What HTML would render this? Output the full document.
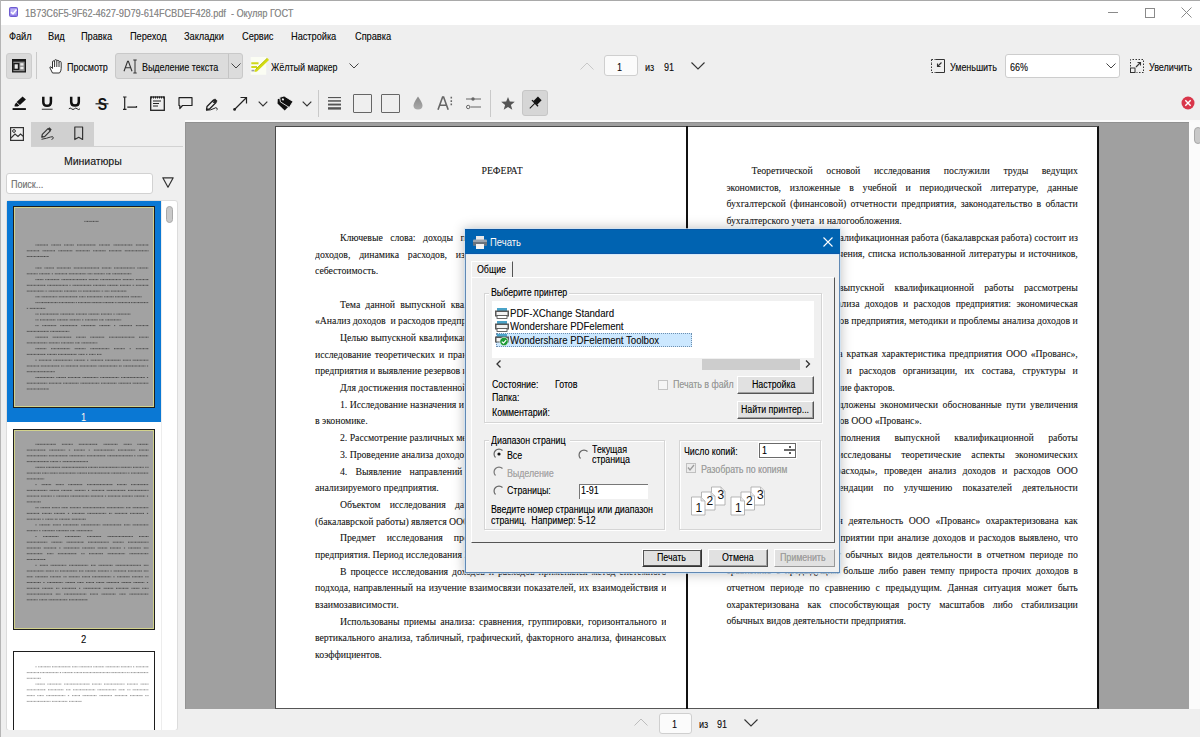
<!DOCTYPE html>
<html><head><meta charset="utf-8">
<style>
*{margin:0;padding:0;box-sizing:border-box}
html,body{width:1200px;height:737px;overflow:hidden}
body{position:relative;background:#efefef;font-family:"Liberation Sans",sans-serif;color:#222}
.a{position:absolute}
.u{position:absolute;font-family:"Liberation Sans",sans-serif;font-size:10.5px;line-height:12px;white-space:nowrap;transform-origin:0 50%;transform:scaleX(.85);color:#111;text-shadow:.25px 0 0 rgba(0,0,0,.35)}
.ic{position:absolute;overflow:visible}
.sep{position:absolute;width:1px;background:#c9c9c9}
.pg{position:absolute;background:#fff}
.tx{position:absolute;font-family:"Liberation Serif",serif;font-size:9.7px;line-height:16.7px;white-space:nowrap;color:#1c1c1c;text-shadow:.25px 0 0 rgba(0,0,0,.3)}
.tx div{height:16.7px;overflow:hidden}
.j{text-align:justify;text-align-last:justify}
.in{text-indent:25px}
.d{position:absolute;font-family:"Liberation Sans",sans-serif;font-size:10px;line-height:12px;white-space:nowrap;transform-origin:0 50%;transform:scaleX(.88);color:#000;text-shadow:.2px 0 0 rgba(0,0,0,.3)}
</style></head><body>
<!-- window border -->
<div class="a" style="left:0;top:0;width:1200px;height:25px;background:#fff"></div>
<div class="a" style="left:0;top:0;width:1200px;height:1px;background:#a9a9a9"></div>
<div class="a" style="left:0;top:0;width:1px;height:737px;background:#b5b5b5"></div>
<!-- title icon -->
<svg class="ic" style="left:9px;top:7px" width="9" height="10" viewBox="0 0 9 10"><rect x="0.5" y="0.5" width="8" height="9" rx="1" fill="#8c7ae6" stroke="#6d5bd0"/><rect x="1.5" y="1.5" width="6" height="6" fill="#b9b0f5"/><path d="M2 5 L4 7 L7.5 2.5" stroke="#fff" stroke-width="1.4" fill="none"/></svg>
<div class="u" style="left:25px;top:6.5px;color:#8a8a8a;font-size:10.8px;transform:scaleX(.845)">1B73C6F5-9F62-4627-9D79-614FCBDEF428.pdf&nbsp; - Окуляр ГОСТ</div>
<!-- window controls -->
<div class="a" style="left:1108px;top:12px;width:10px;height:1px;background:#8a8a8a"></div>
<div class="a" style="left:1145px;top:7.5px;width:10px;height:10px;border:1px solid #8a8a8a"></div>
<svg class="ic" style="left:1181px;top:7px" width="11" height="11" viewBox="0 0 11 11"><path d="M0.5 0.5 L10.5 10.5 M10.5 0.5 L0.5 10.5" stroke="#8a8a8a" stroke-width="1"/></svg>
<!-- menu -->
<div class="u" style="left:9px;top:30px;transform:scaleX(.875)">Файл</div>
<div class="u" style="left:48px;top:30px;transform:scaleX(.875)">Вид</div>
<div class="u" style="left:81px;top:30px;transform:scaleX(.875)">Правка</div>
<div class="u" style="left:130px;top:30px;transform:scaleX(.875)">Переход</div>
<div class="u" style="left:184px;top:30px;transform:scaleX(.875)">Закладки</div>
<div class="u" style="left:242px;top:30px;transform:scaleX(.875)">Сервис</div>
<div class="u" style="left:291px;top:30px;transform:scaleX(.875)">Настройка</div>
<div class="u" style="left:355px;top:30px;transform:scaleX(.875)">Справка</div>
<!-- toolbar 1 -->
<div class="a" style="left:6px;top:53px;width:26px;height:26px;background:#dadada;border:1px solid #cdcdcd;border-radius:3px"></div>
<svg class="ic" style="left:12px;top:59px" width="14" height="14" viewBox="0 0 14 14"><rect x="0" y="0" width="14" height="13.5" fill="#1a1a1a"/><rect x="1.3" y="2.6" width="11.4" height="9.6" fill="#8a8a8a"/><rect x="1.3" y="4" width="6" height="7" fill="#1a1a1a"/><rect x="2.6" y="5.3" width="3.2" height="4.4" fill="#e9e9e9"/><rect x="8.3" y="4.2" width="3.2" height="2.4" fill="#e9e9e9"/><rect x="8.3" y="7.8" width="3.2" height="2.4" fill="#e9e9e9"/></svg>
<div class="sep" style="left:36px;top:52px;height:27px"></div>
<svg class="ic" style="left:49px;top:59px" width="14" height="15" viewBox="0 0 14 15"><path d="M3.5 14 L1 9 Q0.5 7.8 1.8 7.8 L3.5 9.5 L3.5 3 Q3.5 1.8 4.6 1.8 Q5.6 1.8 5.6 3 L5.6 1.8 Q5.6 0.6 6.7 0.6 Q7.8 0.6 7.8 1.8 L7.8 2.4 Q7.8 1.3 8.9 1.3 Q10 1.3 10 2.4 L10 3.5 Q10 2.5 11.1 2.5 Q12.2 2.5 12.2 3.6 L12.2 9.5 Q12.2 12 10.5 14 Z M5.6 3 L5.6 8 M7.8 2.4 L7.8 8 M10 3.5 L10 8" stroke="#333" stroke-width="1" fill="#fff" stroke-linejoin="round"/></svg>
<div class="u" style="left:67px;top:60.7px">Просмотр</div>
<div class="a" style="left:115px;top:53px;width:128px;height:26px;background:#dcdcdc;border:1px solid #c9c9c9;border-radius:3px"></div>
<div class="sep" style="left:228px;top:54px;height:24px;background:#c4c4c4"></div>
<svg class="ic" style="left:123px;top:59px" width="15" height="15" viewBox="0 0 15 15"><path d="M1 12.3 L4.6 2.3 L5.4 2.3 L9 12.3 M2.3 8.8 L7.7 8.8" stroke="#333" stroke-width="1.1" fill="none"/><path d="M10.3 1 L13.7 1 M12 1 L12 14 M10.3 14 L13.7 14" stroke="#333" stroke-width="1" fill="none"/></svg>
<div class="u" style="left:142px;top:60.7px">Выделение текста</div>
<svg class="ic" style="left:231px;top:63px" width="10" height="6" viewBox="0 0 10 6"><path d="M0.5 0.5 L5 5 L9.5 0.5" stroke="#444" stroke-width="1" fill="none"/></svg>
<svg class="ic" style="left:250px;top:57px" width="19" height="18" viewBox="0 0 19 18"><rect x="0.7" y="0" width="15.5" height="17.8" fill="#fbfdf3"/><path d="M1.3 6.2 L8.5 6.2 M1.3 10 L7 10" stroke="#cfd81c" stroke-width="2"/><path d="M1.5 13.6 L4.5 13.6" stroke="#9a9aa8" stroke-width="1.6"/><path d="M5 13 L17.5 1 L19 3 L7 14.5 L4.5 15 Z" fill="#d4dc12"/><path d="M5.5 12.5 L17 1.5" stroke="#b5bf00" stroke-width="1"/></svg>
<div class="u" style="left:271px;top:60.7px">Жёлтый маркер</div>
<svg class="ic" style="left:349px;top:63px" width="10" height="6" viewBox="0 0 10 6"><path d="M0.5 0.5 L5 5 L9.5 0.5" stroke="#444" stroke-width="1" fill="none"/></svg>
<!-- page nav top -->
<svg class="ic" style="left:580px;top:62px" width="14" height="8" viewBox="0 0 14 8"><path d="M0.5 7.5 L7 1 L13.5 7.5" stroke="#c8c8c8" stroke-width="1" fill="none"/></svg>
<div class="a" style="left:604px;top:55px;width:34px;height:21px;background:#fbfbfb;border:1px solid #cfcfcf;border-radius:3px"></div>
<div class="u" style="left:617px;top:60.7px">1</div>
<div class="u" style="left:645px;top:60.7px">из</div>
<div class="u" style="left:664px;top:60.7px">91</div>
<svg class="ic" style="left:691px;top:62px" width="14" height="8" viewBox="0 0 14 8"><path d="M0.5 0.5 L7 7 L13.5 0.5" stroke="#333" stroke-width="1.1" fill="none"/></svg>
<!-- zoom -->
<svg class="ic" style="left:931px;top:59px" width="14" height="14" viewBox="0 0 14 14"><path d="M4.5 0.5 L13.5 0.5 L13.5 13.5 L4.5 13.5" stroke="#333" stroke-width="1" fill="none"/><path d="M0.5 4.5 L0.5 13.5 M0.5 13.5 L4.5 13.5" stroke="#333" stroke-width="1" stroke-dasharray="1.5 1.5" fill="none"/><path d="M0.5 0.5 L4.5 0.5 M0.5 0.5 L0.5 4.5" stroke="#333" stroke-width="1" stroke-dasharray="1.5 1.5" fill="none"/><path d="M10.5 3.5 L6.5 7.5 M6.5 4.5 L6.5 7.5 L9.5 7.5" stroke="#333" stroke-width="1.1" fill="none"/></svg>
<div class="u" style="left:950px;top:60.7px">Уменьшить</div>
<div class="a" style="left:1005px;top:54px;width:115px;height:24px;background:#fff;border:1px solid #cdcdcd;border-radius:3px"></div>
<div class="u" style="left:1010px;top:60.7px">66%</div>
<svg class="ic" style="left:1106px;top:63px" width="10" height="6" viewBox="0 0 10 6"><path d="M0.5 0.5 L5 5 L9.5 0.5" stroke="#444" stroke-width="1" fill="none"/></svg>
<svg class="ic" style="left:1130px;top:59px" width="14" height="14" viewBox="0 0 14 14"><rect x="0.5" y="9" width="4.5" height="4.5" stroke="#333" stroke-width="1" fill="none"/><path d="M0.5 7.5 L0.5 0.5 L13.5 0.5 L13.5 13.5 L6.5 13.5" stroke="#333" stroke-width="1" stroke-dasharray="1.5 1.5" fill="none"/><path d="M6 8 L10.5 3.5 M7.5 3.5 L10.5 3.5 L10.5 6.5" stroke="#333" stroke-width="1.1" fill="none"/></svg>
<div class="u" style="left:1149px;top:60.7px">Увеличить</div>
<!-- toolbar 2 -->
<svg class="ic" style="left:12px;top:95px" width="16" height="16" viewBox="0 0 16 16"><path d="M4.6 6.9 L10.6 1.4 L13.9 4.6 L7.9 10.1 Z" fill="#111"/><path d="M4.2 7.5 L7.4 10.6 L5.6 11.6 L2.6 11.6 L2.6 10 Z" fill="#111"/><rect x="0.6" y="13.1" width="13.3" height="1.9" fill="#111"/></svg>
<svg class="ic" style="left:41px;top:96px" width="13" height="15" viewBox="0 0 13 15"><path d="M2.3 0.8 L2.3 6 Q2.3 9.8 6.1 9.8 Q9.9 9.8 9.9 6 L9.9 0.8" stroke="#111" stroke-width="2.5" fill="none"/><rect x="0.8" y="12.7" width="10.8" height="1.1" fill="#444"/></svg>
<svg class="ic" style="left:68px;top:96px" width="14" height="15" viewBox="0 0 14 15"><path d="M3.2 0.8 L3.2 6 Q3.2 9.6 7 9.6 Q10.8 9.6 10.8 6 L10.8 0.8" stroke="#111" stroke-width="2.5" fill="none"/><path d="M0.8 12.8 Q2.2 11.3 3.6 12.8 Q5 14.3 6.4 12.8 Q7.8 11.3 9.2 12.8 Q10.6 14.3 12 12.8" stroke="#222" stroke-width="1" fill="none"/></svg>
<svg class="ic" style="left:95px;top:95px" width="15" height="16" viewBox="0 0 15 16"><text x="3.2" y="14.5" font-family="Liberation Sans" font-weight="bold" font-size="16.5" fill="#111" transform="scale(.85 1)">S</text><rect x="0.5" y="8.2" width="13" height="1.2" fill="#222"/></svg>
<svg class="ic" style="left:122px;top:96px" width="16" height="15" viewBox="0 0 16 15"><path d="M1 1 L4.5 1 M2.7 1 L2.7 13.3 M1 13.3 L4.5 13.3" stroke="#222" stroke-width="1.2" fill="none"/><path d="M5.3 11.2 L14.5 11.2 L14.5 10" stroke="#222" stroke-width="1.2" fill="none"/></svg>
<svg class="ic" style="left:150px;top:96px" width="15" height="15" viewBox="0 0 15 15"><rect x="0.7" y="1" width="13.6" height="13.3" stroke="#222" stroke-width="1.3" fill="none"/><path d="M1 1.5 L14 1.5" stroke="#222" stroke-width="2" stroke-dasharray="1 1"/><path d="M3 5 L11 5 M3 7.5 L9 7.5 M3 10 L8 10" stroke="#222" stroke-width="1.1"/></svg>
<svg class="ic" style="left:178px;top:97px" width="15" height="13" viewBox="0 0 15 13"><path d="M1 0.7 L14 0.7 L14 8.5 L4.5 8.5 L1.8 11.5 L1.8 8.5 L1 8.5 Z" stroke="#222" stroke-width="1.2" fill="none" stroke-linejoin="round"/></svg>
<svg class="ic" style="left:205px;top:96px" width="15" height="15" viewBox="0 0 15 15"><path d="M2 10.5 L8.5 4 L11 6.5 L4.5 13 L1.5 13.5 Z M7.5 5 L10 7.5" stroke="#222" stroke-width="1.3" fill="none" stroke-linejoin="round"/><path d="M8.5 4 L10 2.5 L12.5 5 L11 6.5 Z" fill="#222"/><path d="M1 14.3 Q6 14.3 9 12.5 Q11 11 12 12.3 Q13 13.5 11.5 14" stroke="#222" stroke-width="1" fill="none"/></svg>
<svg class="ic" style="left:233px;top:96px" width="15" height="15" viewBox="0 0 15 15"><path d="M1.5 13.5 L13.5 1.5 M7.5 1.5 L13.5 1.5 L13.5 7.5" stroke="#222" stroke-width="1.2" fill="none"/><circle cx="1.6" cy="13.4" r="1.4" fill="#222"/></svg>
<svg class="ic" style="left:258px;top:101px" width="10" height="6" viewBox="0 0 10 6"><path d="M0.7 0.7 L5 5 L9.3 0.7" stroke="#333" stroke-width="1.2" fill="none"/></svg>
<svg class="ic" style="left:276px;top:94px" width="18" height="18" viewBox="0 0 18 18"><g transform="rotate(32 9 9)"><path d="M1.5 9.3 L4.5 5.8 L14.5 5.8 L14.5 12.8 L4.5 12.8 Z" fill="#111" transform="rotate(12 9 9) translate(-.5 1.8)"/><path d="M1.5 7 L4.5 3.5 L15 3.5 L15 10.5 L4.5 10.5 Z" fill="#111" stroke="#efefef" stroke-width=".8"/><circle cx="5.3" cy="7" r="1.1" fill="#efefef"/></g></svg>
<svg class="ic" style="left:302px;top:101px" width="10" height="6" viewBox="0 0 10 6"><path d="M0.7 0.7 L5 5 L9.3 0.7" stroke="#333" stroke-width="1.2" fill="none"/></svg>
<div class="sep" style="left:318px;top:90px;height:27px"></div>
<svg class="ic" style="left:328px;top:96px" width="14" height="14" viewBox="0 0 14 14"><rect x="0" y="1" width="13" height="1.1" fill="#555"/><rect x="0" y="4.2" width="13" height="1.5" fill="#555"/><rect x="0" y="7.6" width="13" height="1.9" fill="#555"/><rect x="0" y="11.2" width="13" height="2.4" fill="#555"/></svg>
<div class="a" style="left:353px;top:94px;width:18.5px;height:18.5px;border:1.5px solid #666;border-radius:1px"></div>
<div class="a" style="left:381px;top:94px;width:18.5px;height:18.5px;border:1.5px solid #666;border-radius:1px"></div>
<svg class="ic" style="left:413px;top:96px" width="10" height="14" viewBox="0 0 10 14"><defs><linearGradient id="dg" x1="0" y1="0" x2="0" y2="1"><stop offset="0" stop-color="#888"/><stop offset="1" stop-color="#aaa"/></linearGradient></defs><path d="M5 0.5 Q9.5 7 9.5 9.5 Q9.5 13.5 5 13.5 Q0.5 13.5 0.5 9.5 Q0.5 7 5 0.5 Z" fill="url(#dg)"/></svg>
<svg class="ic" style="left:437px;top:96px" width="16" height="15" viewBox="0 0 16 15"><path d="M1 13.8 L5.6 1 L6.6 1 L11.2 13.8 M2.8 9.2 L9.4 9.2" stroke="#666" stroke-width="1.6" fill="none"/><path d="M14.3 0.8 L14.3 2.5 M14.3 4.2 L14.3 5.9 M14.3 7.6 L14.3 9.3" stroke="#666" stroke-width="1.5"/></svg>
<svg class="ic" style="left:466px;top:96px" width="15" height="14" viewBox="0 0 15 14"><path d="M0 3 L15 3 M4.5 11 L15 11" stroke="#666" stroke-width="1.1"/><circle cx="7" cy="3" r="1.7" fill="#666"/><circle cx="2.2" cy="11" r="1.7" fill="#f4f4f4" stroke="#666" stroke-width="1"/></svg>
<div class="sep" style="left:490px;top:90px;height:27px"></div>
<svg class="ic" style="left:501px;top:97px" width="14" height="13" viewBox="0 0 14 13"><path d="M7 0 L8.8 4.6 L13.8 4.8 L9.9 7.9 L11.3 12.8 L7 10 L2.7 12.8 L4.1 7.9 L0.2 4.8 L5.2 4.6 Z" fill="#555"/></svg>
<div class="a" style="left:522px;top:90px;width:26px;height:26px;background:#d6d6d6;border:1px solid #c6c6c6;border-radius:3px"></div>
<svg class="ic" style="left:527px;top:95px" width="16" height="16" viewBox="0 0 16 16"><g transform="translate(7.6 8.6) rotate(45)"><rect x="-2.6" y="-7.3" width="5.2" height="6.3" fill="#111"/><path d="M-4.3 -0.6 L4.3 -0.6" stroke="#111" stroke-width="1.3"/><path d="M0 -0.6 L0 6.8" stroke="#111" stroke-width="1"/></g></svg>
<svg class="ic" style="left:1181px;top:96px" width="14" height="14" viewBox="0 0 14 14"><circle cx="7" cy="7" r="6.5" fill="#d9364a"/><path d="M4.3 4.3 L9.7 9.7 M9.7 4.3 L4.3 9.7" stroke="#fff" stroke-width="1.4"/></svg>
<div class="a" style="left:185px;top:120px;width:1015px;height:2px;background:#fafafa"></div>
<!-- left panel tabs -->
<div class="a" style="left:31px;top:122px;width:63px;height:24px;background:#d0d0d0"></div>
<div class="a" style="left:31px;top:146px;width:152px;height:1px;background:#d2d2d2"></div>
<svg class="ic" style="left:10px;top:127px" width="14" height="14" viewBox="0 0 14 14"><rect x="0.6" y="0.6" width="12.8" height="12.8" stroke="#333" stroke-width="1.2" fill="none"/><circle cx="4" cy="4" r="1.4" stroke="#333" stroke-width="1" fill="none"/><path d="M1 11 L5 7 L8 9.5 L10.5 7 L13.5 9.5" stroke="#333" stroke-width="1.1" fill="none"/></svg>
<svg class="ic" style="left:40px;top:126px" width="16" height="15" viewBox="0 0 16 15"><path d="M2.3 8.3 L8 2.6 L10.3 4.9 L4.6 10.6 L1.8 11.1 Z" stroke="#333" stroke-width="1.2" fill="none" stroke-linejoin="round"/><path d="M8 2.6 L9.4 1.2 L11.7 3.5 L10.3 4.9 Z" fill="#333"/><path d="M2 10 L4 10.5 L2.5 11.2 Z" fill="#333"/><path d="M1.5 13.3 Q7 12.3 10.5 11 Q13.5 10 13.3 11.8 Q13 13.3 11.5 13.5" stroke="#333" stroke-width="1" fill="none"/></svg>
<svg class="ic" style="left:74px;top:126px" width="10" height="15" viewBox="0 0 10 15"><path d="M0.8 1 L8.6 1 L8.6 13.5 L4.7 11.3 L0.8 13.5 Z" stroke="#333" stroke-width="1.2" fill="none" stroke-linejoin="round"/></svg>
<div class="u" style="left:64px;top:155px;font-size:11px;transform:scaleX(.95);color:#222">Миниатюры</div>
<div class="a" style="left:6px;top:173px;width:147px;height:21px;background:#fff;border:1px solid #d2d2d2;border-radius:3px"></div>
<div class="u" style="left:11px;top:177.5px;color:#7a7a7a">Поиск...</div>
<svg class="ic" style="left:162px;top:177px" width="12" height="11" viewBox="0 0 12 11"><path d="M0.8 0.8 L11.2 0.8 L6 10.2 Z" stroke="#333" stroke-width="1.2" fill="none" stroke-linejoin="round"/></svg>
<!-- list -->
<div class="a" style="left:6px;top:200px;width:172px;height:531px;background:#fff;border:1px solid #dcdcdc;border-radius:3px"></div>
<div class="a" style="left:7px;top:201px;width:154px;height:221px;background:#0a78d4"></div>
<div class="a" style="left:161px;top:201px;width:1px;height:529px;background:#ededed"></div>
<div class="a" style="left:166px;top:206px;width:7px;height:17px;background:#c9c9c9;border:1px solid #a8a8a8;border-radius:4px"></div>

<div class="a" style="left:12.5px;top:205.5px;width:142.5px;height:202px;background:#1e1e1e"></div>
<div class="a" style="left:13.5px;top:206.5px;width:140.5px;height:200px;background:#d2d28c"></div>
<div class="a" style="left:14.5px;top:207.5px;width:138.5px;height:198px;background:#a2a2a2"></div>
<svg class="ic" style="left:14.5px;top:207.5px" width="138" height="198" viewBox="0 0 138 198"><path d="M69.4 13.4H84.0M20.5 37.0H33.1M36.4 37.0H45.9M49.2 37.0H58.7M62.0 37.0H80.9M84.2 37.0H95.3M98.6 37.0H117.6M120.9 37.0H133.5M11.8 42.8H24.4M27.6 42.8H40.2M43.4 42.8H57.6M60.8 42.8H75.0M78.2 42.8H90.8M94.0 42.8H106.6M109.8 42.8H133.5M11.8 48.5H33.9M20.5 60.0H26.8M29.5 60.0H39.0M41.8 60.0H56.0M58.8 60.0H84.1M86.9 60.0H96.3M99.1 60.0H119.7M122.4 60.0H133.5M11.8 65.8H22.9M24.3 65.8H35.3M36.8 65.8H38.3M39.8 65.8H52.4M53.8 65.8H71.2M72.6 65.8H77.4M78.8 65.8H89.9M91.3 65.8H96.0M97.4 65.8H116.4M20.5 71.6H28.4M30.3 71.6H44.6M46.5 71.6H71.8M73.8 71.6H83.3M85.3 71.6H105.8M107.8 71.6H118.9M120.9 71.6H133.5M11.8 77.3H30.8M32.3 77.3H52.9M54.5 77.3H56.0M57.6 77.3H76.6M78.2 77.3H90.8M92.4 77.3H103.5M105.0 77.3H116.1M117.7 77.3H119.3M120.9 77.3H133.5M11.8 83.1H29.2M30.6 83.1H32.2M33.6 83.1H47.8M49.2 83.1H61.9M63.3 83.1H66.5M67.9 83.1H85.3M86.7 83.1H88.3M89.7 83.1H94.4M95.9 83.1H111.7M20.5 88.8H25.2M26.6 88.8H42.4M43.8 88.8H62.8M64.2 88.8H70.5M72.0 88.8H87.8M89.2 88.8H98.7M100.1 88.8H114.3M115.7 88.8H126.8M20.5 94.6H23.6M24.4 94.6H43.4M44.2 94.6H60.0M60.8 94.6H62.3M63.1 94.6H75.8M76.6 94.6H87.6M88.4 94.6H99.5M100.3 94.6H101.9M102.7 94.6H115.3M116.1 94.6H133.5M11.8 100.4H13.4M14.8 100.4H30.6M20.5 106.1H23.6M25.0 106.1H44.0M45.4 106.1H59.6M61.1 106.1H72.1M73.5 106.1H84.6M86.0 106.1H97.1M98.5 106.1H100.1M101.5 106.1H115.7M20.5 111.9H23.6M25.0 111.9H40.8M42.3 111.9H53.3M54.7 111.9H65.8M67.2 111.9H68.8M70.2 111.9H82.9M84.3 111.9H89.0M90.4 111.9H106.2M20.5 117.6H23.6M27.3 117.6H41.6M45.3 117.6H62.7M66.4 117.6H80.6M84.4 117.6H95.4M99.2 117.6H100.7M104.5 117.6H117.1M120.9 117.6H133.5M11.8 123.4H33.9M35.3 123.4H54.3M20.5 129.2H33.1M37.7 129.2H56.6M61.2 129.2H70.7M75.3 129.2H89.5M94.1 129.2H119.4M124.0 129.2H133.5M11.8 134.9H32.3M33.8 134.9H44.8M46.2 134.9H58.9M60.3 134.9H65.0M66.5 134.9H82.3M20.5 140.7H31.5M36.1 140.7H55.1M59.7 140.7H70.8M75.4 140.7H94.4M99.0 140.7H110.0M114.7 140.7H116.2M120.9 140.7H133.5M11.8 146.4H30.8M32.2 146.4H41.7M43.1 146.4H62.0M63.5 146.4H69.8M71.2 146.4H72.8M74.2 146.4H80.5M82.0 146.4H86.7M20.5 152.2H22.0M23.9 152.2H36.6M38.4 152.2H57.4M59.3 152.2H70.3M72.2 152.2H73.8M75.7 152.2H88.3M90.2 152.2H106.0M107.9 152.2H115.8M117.7 152.2H133.5M11.8 158.0H24.4M25.8 158.0H44.8M46.2 158.0H49.3M50.7 158.0H63.4M64.8 158.0H82.1M83.5 158.0H102.5M103.9 158.0H107.0M108.4 158.0H130.5M131.9 158.0H133.5M11.8 163.7H40.2M20.5 169.5H39.4M41.4 169.5H50.9M52.9 169.5H65.5M67.5 169.5H83.3M85.3 169.5H104.2M106.2 169.5H129.9M131.9 169.5H133.5M11.8 175.2H32.3M33.9 175.2H46.6M48.2 175.2H64.0M65.5 175.2H84.5M86.1 175.2H101.9M103.5 175.2H116.1M117.7 175.2H133.5M11.8 181.0H33.9" stroke="#111" stroke-width="1.0" stroke-dasharray="1 .5 .7 .4 1.2 .5" opacity="0.62"/></svg>
<div class="u" style="left:81px;top:410.5px;color:#fff;font-size:11px">1</div>
<div class="a" style="left:12.5px;top:428.5px;width:142.5px;height:201px;background:#1e1e1e"></div>
<div class="a" style="left:13.5px;top:429.5px;width:140.5px;height:199px;background:#d2d28c"></div>
<div class="a" style="left:14.5px;top:430.5px;width:138.5px;height:197px;background:#a2a2a2"></div>
<svg class="ic" style="left:14.5px;top:430.5px" width="138" height="197" viewBox="0 0 138 197"><path d="M20.5 13.3H41.0M46.9 13.3H57.9M63.8 13.3H82.7M88.6 13.3H102.8M108.7 13.3H116.6M122.4 13.3H133.5M11.8 19.1H30.8M34.4 19.1H50.2M53.8 19.1H55.4M59.0 19.1H70.1M73.7 19.1H75.2M78.9 19.1H99.4M103.0 19.1H120.4M124.0 19.1H133.5M11.8 24.8H32.3M33.9 24.8H52.9M54.5 24.8H70.3M71.9 24.8H90.8M92.4 24.8H117.7M119.3 24.8H120.9M122.4 24.8H133.5M11.8 30.6H33.9M35.3 30.6H43.2M44.7 30.6H46.2M47.7 30.6H72.9M20.5 36.3H29.9M31.2 36.3H45.4M46.7 36.3H71.9M73.2 36.3H82.7M83.9 36.3H104.5M105.7 36.3H116.8M118.0 36.3H129.1M130.3 36.3H133.5M11.8 42.1H26.0M27.2 42.1H33.5M34.7 42.1H42.6M43.8 42.1H61.2M62.4 42.1H71.9M73.0 42.1H95.2M96.4 42.1H112.2M113.3 42.1H114.9M116.1 42.1H133.5M11.8 47.9H29.2M20.5 53.6H22.0M26.7 53.6H36.1M40.8 53.6H48.7M53.3 53.6H67.5M72.1 53.6H97.4M102.0 53.6H111.5M116.1 53.6H133.5M11.8 59.4H32.3M34.6 59.4H44.1M46.3 59.4H57.4M59.7 59.4H70.7M73.0 59.4H74.6M76.8 59.4H89.5M91.7 59.4H110.7M113.0 59.4H133.5M11.8 65.1H24.4M25.9 65.1H36.9M38.4 65.1H39.9M41.4 65.1H54.0M55.4 65.1H74.4M75.8 65.1H88.5M89.9 65.1H91.5M92.9 65.1H105.5M106.9 65.1H118.0M119.4 65.1H130.5M131.9 65.1H133.5M11.8 70.9H26.0M20.5 76.7H23.6M25.5 76.7H35.0M36.9 76.7H44.8M46.6 76.7H53.0M54.9 76.7H65.9M67.8 76.7H89.9M91.8 76.7H109.2M111.1 76.7H115.8M117.7 76.7H133.5M11.8 82.4H24.4M27.1 82.4H36.6M39.2 82.4H50.3M52.9 82.4H54.5M57.1 82.4H69.8M72.4 82.4H91.3M94.0 82.4H97.1M99.8 82.4H112.4M115.1 82.4H129.3M131.9 82.4H133.5M11.8 88.2H26.0M27.4 88.2H29.0M30.4 88.2H38.3M39.8 88.2H42.9M44.3 88.2H55.4M56.8 88.2H71.0M20.5 93.9H22.0M24.4 93.9H35.5M37.9 93.9H45.8M48.1 93.9H63.9M66.3 93.9H85.3M87.7 93.9H106.6M109.0 93.9H115.3M117.7 93.9H133.5M11.8 99.7H22.9M24.3 99.7H25.9M27.3 99.7H39.9M41.3 99.7H54.0M55.4 99.7H60.1M61.6 99.7H77.4M20.5 105.5H22.0M28.2 105.5H44.0M50.2 105.5H66.0M72.2 105.5H86.4M92.6 105.5H117.8M124.0 105.5H133.5M11.8 111.2H32.3M36.5 111.2H47.5M51.6 111.2H69.0M73.1 111.2H93.7M97.8 111.2H108.8M113.0 111.2H133.5M11.8 117.0H26.0M28.8 117.0H41.5M44.3 117.0H45.9M48.7 117.0H64.5M67.3 117.0H79.9M82.7 117.0H92.2M95.0 117.0H106.1M108.9 117.0H110.5M113.3 117.0H125.9M128.8 117.0H133.5M11.8 122.7H27.6M32.1 122.7H38.4M42.9 122.7H61.8M66.3 122.7H69.5M74.0 122.7H88.2M92.7 122.7H110.1M114.5 122.7H133.5M11.8 128.5H30.8M20.5 134.3H22.0M24.9 134.3H32.8M35.6 134.3H51.4M54.2 134.3H73.2M76.0 134.3H80.8M83.6 134.3H97.8M100.6 134.3H125.9M128.8 134.3H133.5M11.8 140.0H29.2M30.8 140.0H38.7M40.2 140.0H43.4M45.0 140.0H62.4M64.0 140.0H68.7M70.3 140.0H81.3M82.9 140.0H94.0M95.6 140.0H97.1M98.7 140.0H111.4M113.0 140.0H127.2M128.8 140.0H133.5M11.8 145.8H18.1M20.3 145.8H33.0M35.2 145.8H46.3M48.5 145.8H51.6M53.8 145.8H64.9M67.1 145.8H75.0M77.2 145.8H96.2M98.4 145.8H100.0M102.2 145.8H114.8M117.1 145.8H128.1M130.3 145.8H133.5M11.8 151.5H26.0M28.4 151.5H30.0M32.3 151.5H48.1M50.5 151.5H60.0M62.4 151.5H68.7M71.1 151.5H79.0M81.3 151.5H89.2M91.6 151.5H104.3M106.6 151.5H116.1M118.5 151.5H129.5M131.9 151.5H133.5M11.8 157.3H24.4M27.3 157.3H38.3M41.1 157.3H44.3M47.1 157.3H61.3M64.1 157.3H65.7M68.5 157.3H85.9M88.7 157.3H98.2M101.0 157.3H113.7M116.5 157.3H124.4M127.2 157.3H133.5M11.8 163.1H37.1M40.8 163.1H45.5M49.2 163.1H71.3M75.0 163.1H82.9M86.6 163.1H100.8M104.5 163.1H110.8M114.5 163.1H133.5M11.8 168.8H22.9M24.3 168.8H32.2M33.6 168.8H52.6M54.0 168.8H72.9" stroke="#111" stroke-width="1.0" stroke-dasharray="1 .5 .7 .4 1.2 .5" opacity="0.62"/></svg>
<div class="u" style="left:81px;top:632.5px;color:#111;font-size:11px">2</div>
<div class="a" style="left:12.5px;top:651px;width:142.5px;height:90px;background:#1e1e1e"></div>
<div class="a" style="left:13.5px;top:652px;width:140.5px;height:88px;background:#fff"></div>
<div class="a" style="left:14.5px;top:653px;width:138.5px;height:86px;background:#fff"></div>
<svg class="ic" style="left:14.5px;top:653px" width="138" height="86" viewBox="0 0 138 86"><path d="M20.5 13.8H22.0M23.2 13.8H35.8M37.0 13.8H55.9M57.1 13.8H63.4M64.5 13.8H77.2M78.3 13.8H89.4M90.6 13.8H104.8M105.9 13.8H117.0M118.1 13.8H119.7M120.9 13.8H133.5M11.8 19.6H24.4M25.2 19.6H44.2M45.0 19.6H46.6M47.4 19.6H58.4M59.2 19.6H67.1M67.9 19.6H94.8M95.6 19.6H111.4M112.2 19.6H115.3M116.1 19.6H133.5M11.8 25.3H26.0M20.5 31.1H29.9M32.4 31.1H46.7M49.2 31.1H74.5M77.0 31.1H86.5M89.0 31.1H109.5M112.0 31.1H123.1M125.6 31.1H133.5M11.8 36.8H30.8M33.0 36.8H48.8M51.1 36.8H55.8M58.1 36.8H80.2M82.5 36.8H101.4M103.7 36.8H110.0M112.3 36.8H115.4M117.7 36.8H133.5M11.8 42.6H19.7M22.3 42.6H28.7M31.3 42.6H50.3M52.9 42.6H54.5M57.1 42.6H65.0M67.6 42.6H81.9M84.5 42.6H97.1M99.8 42.6H112.4M115.1 42.6H127.7M130.3 42.6H133.5M11.8 48.4H35.5M36.9 48.4H52.7M54.1 48.4H66.8" stroke="#222" stroke-width="0.9" stroke-dasharray="1 .5 .7 .4 1.2 .5" opacity="0.55"/></svg>
<div class="a" style="left:7px;top:730px;width:170px;height:7px;background:#efefef"></div>
<!-- doc area -->
<div class="a" style="left:185px;top:122px;width:1004px;height:587px;background:#a0a0a0;border-top:1.5px solid #909090;border-left:1px solid #939393"></div>
<div class="a" style="left:1189px;top:122px;width:11px;height:587px;background:#fbfbfb"></div>
<div class="a" style="left:1194px;top:127px;width:8px;height:17px;background:#c9c9c9;border:1px solid #a8a8a8;border-radius:4px"></div>
<div class="pg" style="left:275px;top:125.5px;width:412px;height:583.5px;border-left:1px solid #4a4a4a;border-top:1px solid #4a4a4a;border-bottom:1.3px solid #555"></div>
<div class="pg" style="left:687px;top:125.5px;width:412px;height:583.5px;border-top:1px solid #4a4a4a;border-bottom:1.3px solid #555;border-right:2px solid #111"></div>
<div class="a" style="left:686px;top:126px;width:2px;height:583px;background:#111"></div>

<div class="tx" style="left:481.5px;top:162.9px;">РЕФЕРАТ</div>
<div class="tx" style="left:315px;top:229.9px;width:351.4px">
<div class="j in">Ключевые слова: доходы предприятия, расходы предприятия, динамика</div>
<div class="j">доходов, динамика расходов, издержки, прибыль, выручка, рентабельность,</div>
<div>себестоимость.</div>
<div>&nbsp;</div>
<div class="j in">Тема данной выпускной квалификационной работы (бакалаврской работы)</div>
<div>«Анализ доходов&nbsp; и расходов предприятия (на примере ООО «Прованс»)».</div>
<div class="j in">Целью выпускной квалификационной работы (бакалаврской работы) является</div>
<div class="j">исследование теоретических и практических аспектов анализа доходов и расходов</div>
<div>предприятия и выявление резервов их оптимизации в ООО «Прованс».</div>
<div class="in">Для достижения поставленной цели необходимо решить следующие задачи:</div>
<div class="j in">1. Исследование назначения и сущности анализа доходов и расходов предприятия</div>
<div>в экономике.</div>
<div class="in">2. Рассмотрение различных методик анализа доходов и расходов.</div>
<div class="in">3. Проведение анализа доходов и расходов ООО «Прованс».</div>
<div class="j in">4. Выявление направлений повышения доходов и снижения расходов</div>
<div>анализируемого предприятия.</div>
<div class="j in">Объектом исследования данной выпускной квалификационной работы</div>
<div>(бакалаврской работы) является ООО «Прованс».</div>
<div class="j in">Предмет исследования процесс формирования доходов и расходов</div>
<div>предприятия. Период исследования 2016 – 2018 гг.</div>
<div class="j in">В процессе исследования доходов и расходов применялся метод системного</div>
<div class="j">подхода, направленный на изучение взаимосвязи показателей, их взаимодействия и</div>
<div>взаимозависимости.</div>
<div class="j in">Использованы приемы анализа: сравнения, группировки, горизонтального и</div>
<div class="j">вертикального анализа, табличный, графический, факторного анализа, финансовых</div>
<div>коэффициентов.</div>
</div>
<div class="tx" style="left:726.4px;top:162.9px;width:351.4px">
<div class="j in">Теоретической основой исследования послужили труды ведущих</div>
<div class="j">экономистов, изложенные в учебной и периодической литературе, данные</div>
<div class="j">бухгалтерской (финансовой) отчетности предприятия, законодательство в области</div>
<div>бухгалтерского учета&nbsp; и налогообложения.</div>
<div class="j in">Данная выпускная квалификационная работа (бакалаврская работа) состоит из</div>
<div class="j">введения, трех глав, заключения, списка использованной литературы и источников,</div>
<div>приложений.</div>
<div class="j in">В первой главе выпускной квалификационной работы рассмотрены</div>
<div class="j">теоретические основы анализа доходов и расходов предприятия: экономическая</div>
<div class="j">сущность доходов и расходов предприятия, методики и проблемы анализа доходов и</div>
<div>расходов.</div>
<div class="j in">Во второй главе дана краткая характеристика предприятия ООО «Прованс»,</div>
<div class="j">проведен анализ доходов и расходов организации, их состава, структуры и</div>
<div>динамики, а также их влияние факторов.</div>
<div class="j in">В третьей главе предложены экономически обоснованные пути увеличения</div>
<div>доходов и снижения расходов ООО «Прованс».</div>
<div class="j in">В результате выполнения выпускной квалификационной работы</div>
<div class="j">(бакалаврской работы) исследованы теоретические аспекты экономических</div>
<div class="j">категорий «доходы» и «расходы», проведен анализ доходов и расходов ООО</div>
<div class="j">«Прованс», даны рекомендации по улучшению показателей деятельности</div>
<div>предприятия.</div>
<div class="j in">В целом финансовая деятельность ООО «Прованс» охарактеризована как</div>
<div class="j">стабильная. Также на предприятии при анализе доходов и расходов выявлено, что</div>
<div class="j">темп прироста доходов от обычных видов деятельности в отчетном периоде по</div>
<div class="j">сравнению с предыдущим больше либо равен темпу прироста прочих доходов в</div>
<div class="j">отчетном периоде по сравнению с предыдущим. Данная ситуация может быть</div>
<div class="j">охарактеризована как способствующая росту масштабов либо стабилизации</div>
<div>обычных видов деятельности предприятия.</div>
</div>
<!-- bottom nav -->
<svg class="ic" style="left:634px;top:718px" width="14" height="8" viewBox="0 0 14 8"><path d="M0.5 7.5 L7 1 L13.5 7.5" stroke="#bdbdbd" stroke-width="1" fill="none"/></svg>
<div class="a" style="left:658.5px;top:713px;width:33px;height:20.5px;background:#fbfbfb;border:1px solid #cfcfcf;border-radius:3px"></div>
<div class="u" style="left:671.5px;top:717.5px">1</div>
<div class="u" style="left:699px;top:717.5px">из</div>
<div class="u" style="left:717px;top:717.5px">91</div>
<svg class="ic" style="left:744px;top:719px" width="14" height="8" viewBox="0 0 14 8"><path d="M0.5 0.5 L7 7 L13.5 0.5" stroke="#333" stroke-width="1.1" fill="none"/></svg>

<!-- dialog -->
<div class="a" style="left:465px;top:229px;width:375px;height:343.5px;background:#f0f0f0;border:1px solid #6189b4;box-shadow:0 0 0 1px rgba(205,228,248,.7),0 0 11px 1px rgba(0,0,0,.25)"></div>
<div class="a" style="left:465px;top:229px;width:375px;height:25px;background:#0063b1;border-top:1px solid #0a55a0;border-bottom:1px solid #0a58a8"></div><div class="a" style="left:466px;top:254px;width:373px;height:1px;background:#d7ebfa"></div>
<svg class="ic" style="left:473px;top:236px" width="14" height="13" viewBox="0 0 14 13"><rect x="3" y="0" width="8" height="4" fill="#e8e8e8"/><rect x="0" y="3.5" width="14" height="6" rx="1" fill="#9aa3ad"/><rect x="0" y="6" width="14" height="3.5" fill="#6b737c"/><rect x="3" y="8" width="8" height="5" fill="#f4f4f4"/></svg>
<div class="d" style="left:490px;top:236px;color:#fff;font-size:11px;transform:scaleX(.86)">Печать</div>
<svg class="ic" style="left:822.5px;top:237px" width="10" height="10" viewBox="0 0 10 10"><path d="M0.5 0.5 L9.5 9.5 M9.5 0.5 L0.5 9.5" stroke="#fff" stroke-width="1.1"/></svg>
<!-- tab -->
<div class="a" style="left:471px;top:261px;width:42px;height:17px;background:#f0f0f0;border-left:1px solid #fff;border-top:1px solid #fff;border-right:1px solid #555"></div>
<div class="d" style="left:477px;top:263.5px">Общие</div>
<div class="a" style="left:471px;top:277px;width:364px;height:266px;border-left:1px solid #fff;border-top:1px solid #fff;border-right:1px solid #555;border-bottom:1px solid #555"></div>
<div class="a" style="left:512px;top:277px;width:322px;height:1px;background:#fff"></div>
<!-- group 1 -->
<div class="a" style="left:484px;top:292.5px;width:337.5px;height:130px;border:1px solid #d5d5d5;box-shadow:inset 1px 1px 0 #fff,1px 1px 0 #fff"></div>
<div class="a" style="left:489px;top:287px;width:80px;height:12px;background:#f0f0f0"></div>
<div class="d" style="left:491px;top:287px">Выберите принтер</div>
<div class="a" style="left:491.5px;top:301px;width:322px;height:57px;background:#fff"></div>
<svg class="ic" style="left:494.5px;top:307.5px" width="14" height="11" viewBox="0 0 14 11"><rect x="2" y="0" width="10" height="3" fill="#4aa3c8"/><rect x="0" y="2.5" width="14" height="6" fill="#595959"/><rect x="1.5" y="4" width="11" height="3.5" fill="#f3f3f3"/><rect x="2" y="7.5" width="10" height="3" fill="#fff" stroke="#444" stroke-width=".8"/></svg>
<svg class="ic" style="left:494.5px;top:321px" width="14" height="11" viewBox="0 0 14 11"><rect x="2" y="0" width="10" height="3" fill="#4aa3c8"/><rect x="0" y="2.5" width="14" height="6" fill="#595959"/><rect x="1.5" y="4" width="11" height="3.5" fill="#f3f3f3"/><rect x="2" y="7.5" width="10" height="3" fill="#fff" stroke="#444" stroke-width=".8"/></svg>
<div class="a" style="left:496px;top:333px;width:196px;height:13.5px;background:#cce8ff;border:1px dotted #6d8fb0"></div>
<svg class="ic" style="left:494.5px;top:334px" width="14" height="12" viewBox="0 0 14 12"><rect x="2" y="0" width="10" height="3" fill="#4aa3c8"/><rect x="0" y="2.5" width="14" height="6" fill="#595959"/><rect x="1.5" y="4" width="11" height="3.5" fill="#f3f3f3"/><circle cx="9" cy="7.5" r="4.2" fill="#1d9a35" stroke="#fff" stroke-width=".6"/><path d="M6.8 7.6 L8.5 9.2 L11.2 6.2" stroke="#fff" stroke-width="1.2" fill="none"/></svg>
<div class="d" style="left:510px;top:306.5px;font-size:11.3px;transform:scaleX(.85);color:#111">PDF-XChange Standard</div>
<div class="d" style="left:510px;top:320px;font-size:11.3px;transform:scaleX(.85);color:#111">Wondershare PDFelement</div>
<div class="d" style="left:510px;top:333.5px;font-size:11.3px;transform:scaleX(.85);color:#111">Wondershare PDFelement Toolbox</div>
<div class="a" style="left:491.5px;top:358px;width:322px;height:12px;background:#f0f0f0"></div>
<svg class="ic" style="left:495.5px;top:360px" width="6" height="8" viewBox="0 0 6 8"><path d="M4.5 0.5 L1 4 L4.5 7.5" stroke="#333" stroke-width="1.3" fill="none"/></svg>
<div class="a" style="left:702px;top:358.5px;width:97.5px;height:11px;background:#cdcdcd"></div>
<svg class="ic" style="left:805px;top:360px" width="6" height="8" viewBox="0 0 6 8"><path d="M1 0.5 L4.5 4 L1 7.5" stroke="#333" stroke-width="1.3" fill="none"/></svg>
<div class="d" style="left:492px;top:378.5px">Состояние:</div>
<div class="d" style="left:555px;top:378.5px">Готов</div>
<div class="d" style="left:492px;top:392px">Папка:</div>
<div class="d" style="left:492px;top:407px">Комментарий:</div>
<div class="a" style="left:658px;top:380px;width:9.5px;height:9.5px;border:1px solid #c4c4c4;background:#f5f5f5"></div>
<div class="d" style="left:673px;top:378.5px;color:#9c9c9c">Печать в файл</div>
<div class="a" style="left:737px;top:376px;width:77px;height:18px;background:#e1e1e1;border:1px solid #fff;border-right-color:#555;border-bottom-color:#555;box-shadow:inset -1px -1px 0 #a0a0a0"></div>
<div class="d" style="left:752px;top:379px">Настройка</div>
<div class="a" style="left:737px;top:401px;width:77px;height:18px;background:#e1e1e1;border:1px solid #fff;border-right-color:#555;border-bottom-color:#555;box-shadow:inset -1px -1px 0 #a0a0a0"></div>
<div class="d" style="left:741px;top:404px">Найти принтер...</div>
<!-- group 2 -->
<div class="a" style="left:484px;top:439.5px;width:181px;height:90.5px;border:1px solid #d5d5d5;box-shadow:inset 1px 1px 0 #fff,1px 1px 0 #fff"></div>
<div class="a" style="left:489px;top:434px;width:81px;height:12px;background:#f0f0f0"></div>
<div class="d" style="left:491px;top:435px">Диапазон страниц</div>
<svg class="ic" style="left:493.5px;top:449px" width="10" height="10" viewBox="0 0 10 10"><path d="M8.5 1.5 A4.5 4.5 0 0 0 1.5 8.5" stroke="#666" stroke-width="1.2" fill="none"/><circle cx="5" cy="5" r="1.6" fill="#111"/></svg>
<div class="d" style="left:507px;top:450.2px">Все</div>
<svg class="ic" style="left:578.5px;top:450px" width="10" height="10" viewBox="0 0 10 10"><path d="M8.5 1.5 A4.5 4.5 0 0 0 1.5 8.5" stroke="#666" stroke-width="1.2" fill="none"/></svg>
<div class="d" style="left:592px;top:444px">Текущая</div>
<div class="d" style="left:592px;top:454px">страница</div>
<svg class="ic" style="left:493.5px;top:467px" width="10" height="10" viewBox="0 0 10 10"><path d="M8.5 1.5 A4.5 4.5 0 0 0 1.5 8.5" stroke="#777" stroke-width="1.2" fill="none"/></svg>
<div class="d" style="left:507px;top:467.5px;color:#a8a8a8">Выделение</div>
<svg class="ic" style="left:493.5px;top:486px" width="10" height="10" viewBox="0 0 10 10"><path d="M8.5 1.5 A4.5 4.5 0 0 0 1.5 8.5" stroke="#666" stroke-width="1.2" fill="none"/></svg>
<div class="d" style="left:507px;top:485px">Страницы:</div>
<div class="a" style="left:579px;top:484px;width:69px;height:14.5px;background:#fff;border-left:1px solid #777;border-top:1px solid #777"></div>
<div class="d" style="left:581px;top:485px">1-91</div>
<div class="d" style="left:491px;top:504px">Введите номер страницы или диапазон</div>
<div class="d" style="left:491px;top:515px">страниц.&nbsp; Например: 5-12</div>
<!-- group 3 -->
<div class="a" style="left:678.5px;top:439.5px;width:142.5px;height:90px;border:1px solid #d5d5d5;box-shadow:inset 1px 1px 0 #fff,1px 1px 0 #fff"></div>
<div class="d" style="left:684px;top:446px">Число копий:</div>
<div class="a" style="left:758.5px;top:443px;width:37.5px;height:14.5px;background:#fff;border:1.5px solid #6a6a6a;box-shadow:0 0 0 1px #fff"></div>
<div class="d" style="left:762px;top:444.5px">1</div>
<div class="a" style="left:783.5px;top:449.3px;width:11px;height:1.5px;background:#6a6a6a"></div>
<div class="a" style="left:789px;top:446.3px;width:2px;height:2px;background:#222;border-radius:1px"></div>
<div class="a" style="left:789px;top:452px;width:2px;height:2px;background:#222;border-radius:1px"></div>
<div class="a" style="left:686px;top:463px;width:9.5px;height:9.5px;border:1px solid #c0c0c0;background:#ececec"></div>
<svg class="ic" style="left:687px;top:464px" width="8" height="8" viewBox="0 0 8 8"><path d="M1 3.5 L3 6 L7 1" stroke="#9c9c9c" stroke-width="1.3" fill="none"/></svg>
<div class="d" style="left:701px;top:463.5px;color:#a0a0a0">Разобрать по копиям</div>
<svg class="ic" style="left:691px;top:486px" width="80" height="32" viewBox="0 0 80 32">
<g id="cg">
<path d="M20.5 1 L30 1 L34 5 L34 19 L20.5 19 Z" fill="#fff" stroke="#a5a5a5" stroke-width=".8"/><path d="M30 1 L30 5 L34 5" fill="#e4e4e4" stroke="#a5a5a5" stroke-width=".6"/>
<path d="M10.5 6 L20 6 L24 10 L24 24 L10.5 24 Z" fill="#fff" stroke="#a5a5a5" stroke-width=".8"/><path d="M20 6 L20 10 L24 10" fill="#e4e4e4" stroke="#a5a5a5" stroke-width=".6"/>
<path d="M0.5 11 L10 11 L14 15 L14 29 L0.5 29 Z" fill="#fff" stroke="#a5a5a5" stroke-width=".8"/><path d="M10 11 L10 15 L14 15" fill="#e4e4e4" stroke="#a5a5a5" stroke-width=".6"/>
<text x="26.5" y="13" font-family="Liberation Sans" font-size="12" fill="#111">3</text>
<text x="15.5" y="19" font-family="Liberation Sans" font-size="12" fill="#111">2</text>
<text x="4.5" y="26" font-family="Liberation Sans" font-size="12" fill="#111">1</text>
</g>
<use href="#cg" x="39.5" y="0"/>
</svg>
<!-- buttons -->
<div class="a" style="left:642px;top:549px;width:60px;height:17.5px;background:#e1e1e1;border:1px solid #fff;border-right-color:#333;border-bottom-color:#333;outline:1px solid #555;outline-offset:-2px"></div>
<div class="d" style="left:657px;top:552px">Печать</div>
<div class="a" style="left:708px;top:549px;width:60px;height:17.5px;background:#e1e1e1;border:1px solid #fff;border-right-color:#555;border-bottom-color:#555;box-shadow:inset -1px -1px 0 #a0a0a0"></div>
<div class="d" style="left:722px;top:552px">Отмена</div>
<div class="a" style="left:773.5px;top:549px;width:61px;height:17.5px;background:#e1e1e1;border:1px solid #fff;border-right-color:#999;border-bottom-color:#999"></div>
<div class="d" style="left:780px;top:552px;color:#a0a0a0">Применить</div>
</body></html>
